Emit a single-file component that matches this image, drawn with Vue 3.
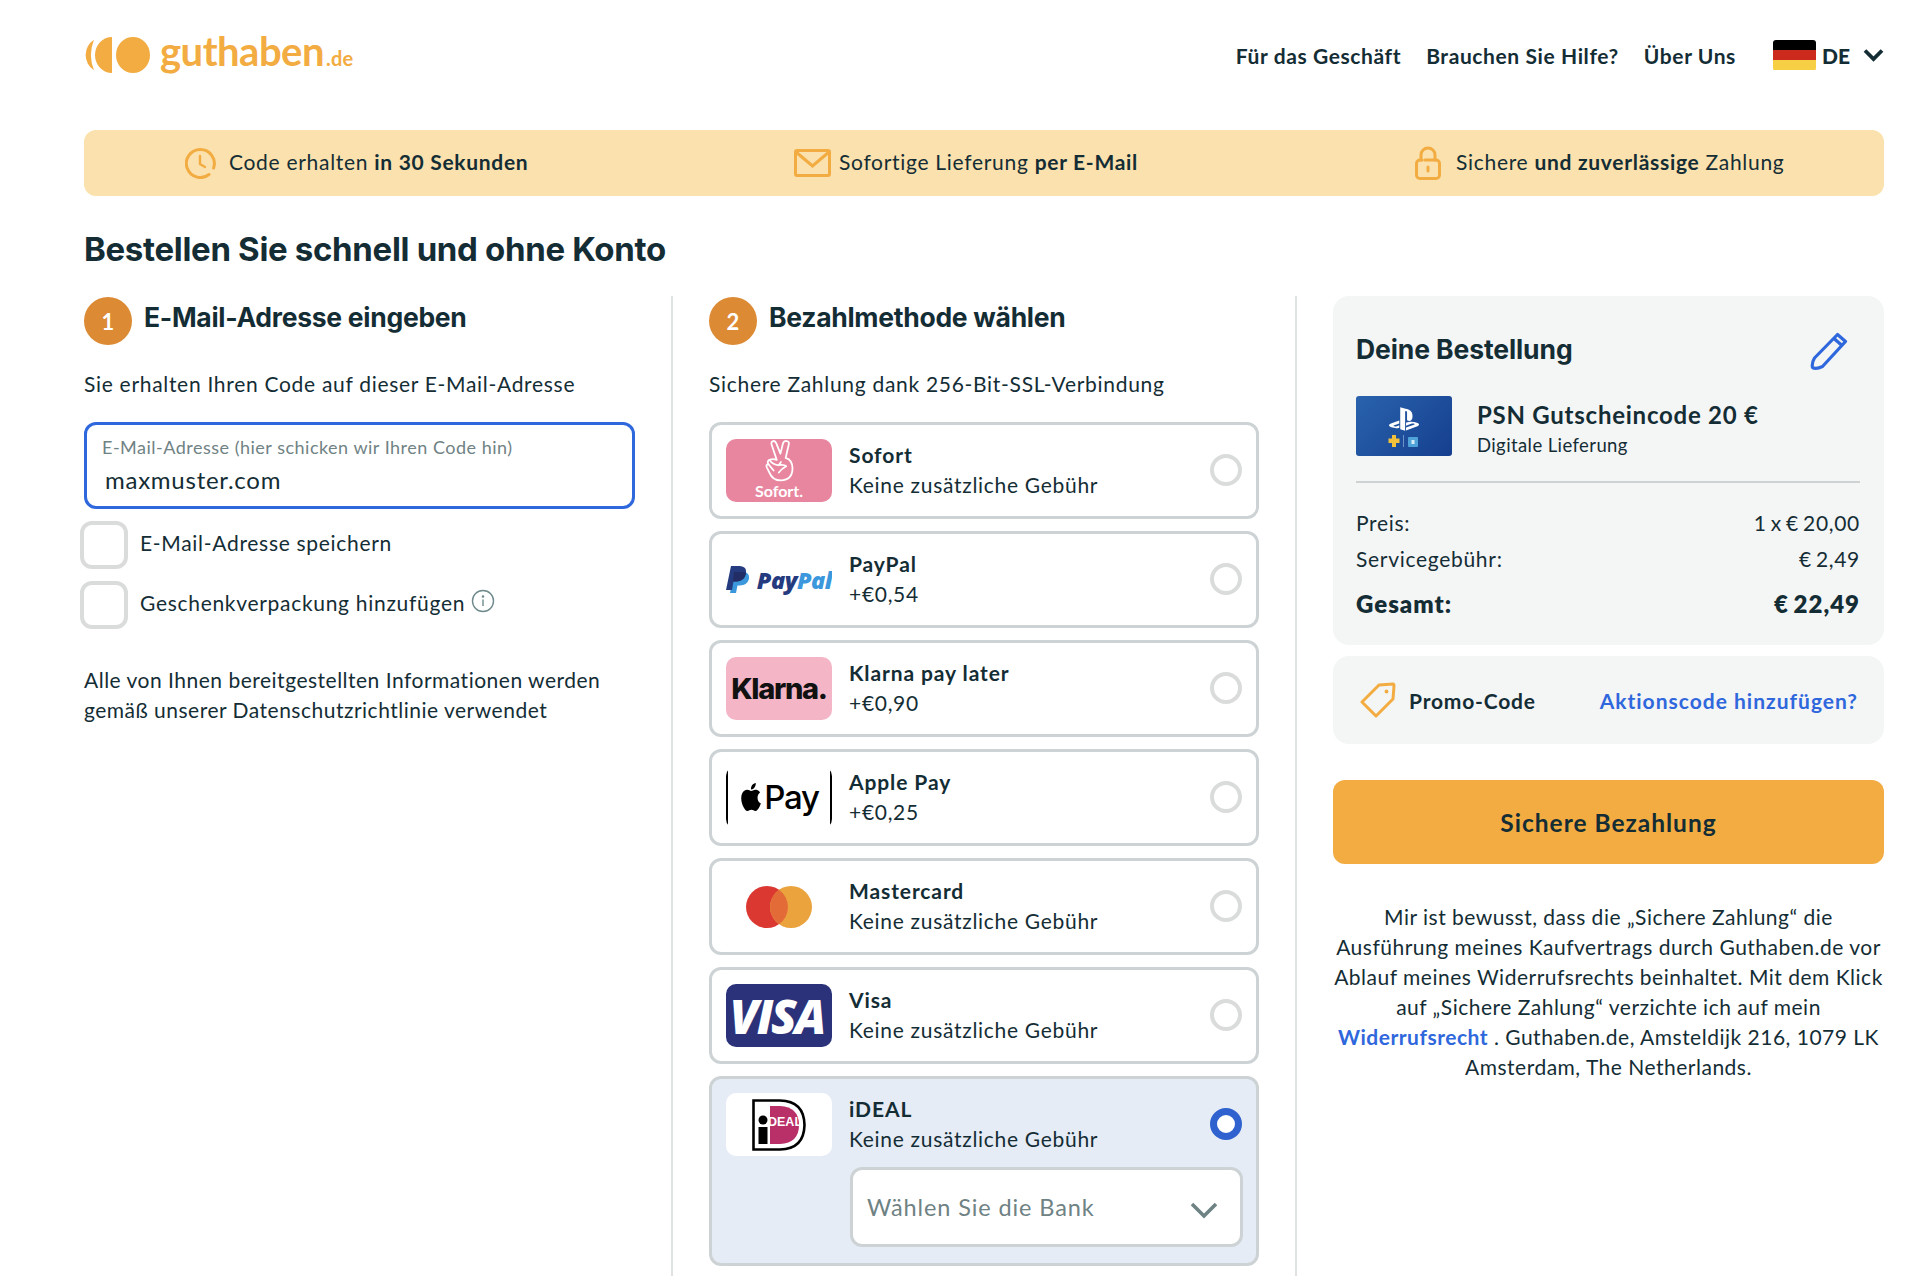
<script setup>
const perks = [
  { icon: 'clock', a: 'Code erhalten ', b: 'in 30 Sekunden', c: '' },
  { icon: 'mail', a: 'Sofortige Lieferung ', b: 'per E-Mail', c: '' },
  { icon: 'lock', a: 'Sichere ', b: 'und zuverlässige', c: ' Zahlung' }
]
const methods = [
  { id: 'sofort', name: 'Sofort', fee: 'Keine zusätzliche Gebühr' },
  { id: 'paypal', name: 'PayPal', fee: '+€0,54' },
  { id: 'klarna', name: 'Klarna pay later', fee: '+€0,90' },
  { id: 'apple', name: 'Apple Pay', fee: '+€0,25' },
  { id: 'mc', name: 'Mastercard', fee: 'Keine zusätzliche Gebühr' },
  { id: 'visa', name: 'Visa', fee: 'Keine zusätzliche Gebühr' },
  { id: 'ideal', name: 'iDEAL', fee: 'Keine zusätzliche Gebühr', active: true }
]
</script>

<template>
  <div class="page">
    <header class="top">
      <div class="logo">
        <svg width="66" height="36" viewBox="0 0 66 36">
          <path d="M10 2.800 A18 18 0 0 0 10 33.200 A40 40 0 0 1 10 2.800 Z" fill="#f2ac42" />
          <path d="M28 0 V36 A17 18 0 0 1 28 0 Z" fill="#f2ac42" />
          <ellipse cx="49" cy="18" rx="17" ry="18" fill="#f2ac42" />
        </svg>
        <span class="logo-name">guthaben</span><span class="logo-tld">.de</span>
      </div>
      <nav class="nav">
        <a>Für das Geschäft</a>
        <a>Brauchen Sie Hilfe?</a>
        <a>Über Uns</a>
        <span class="lang">
          <span class="flag"><i class="f1"></i><i class="f2"></i><i class="f3"></i></span>
          <b>DE</b>
          <svg width="21" height="14" viewBox="0 0 21 14"><path d="M2 2.500 L10.500 11 L19 2.500" fill="none" stroke="#142d35" stroke-width="3.800" /></svg>
        </span>
      </nav>
    </header>

    <section class="perks">
      <div v-for="p in perks" :key="p.icon" class="perk" :class="p.icon">
        <svg v-if="p.icon === 'clock'" width="32" height="32" viewBox="0 0 32 32" fill="none" stroke="#f2ac42" stroke-width="3" stroke-linecap="round">
          <path d="M28.600 21 A14 14 0 1 0 24 27.500" /><path d="M15 9 V17 L20 20" stroke-width="2.400" />
        </svg>
        <svg v-if="p.icon === 'mail'" width="37" height="28" viewBox="0 0 37 28" fill="none" stroke="#f2ac42" stroke-width="3">
          <rect x="1.500" y="1.500" width="34" height="25" rx="1.500" /><path d="M2 3 L18.500 17 L35 3" />
        </svg>
        <svg v-if="p.icon === 'lock'" width="26" height="34" viewBox="0 0 26 34" fill="none" stroke="#f2ac42" stroke-width="3" stroke-linecap="round">
          <path d="M6 14 V9 A7 7 0 0 1 20 9 V14" /><path d="M10 14 H21 A3.500 3.500 0 0 1 24.500 17.500 V29 A3.500 3.500 0 0 1 21 32.500 H5 A3.500 3.500 0 0 1 1.500 29 V17.500 A3.500 3.500 0 0 1 5 14 H7" /><path d="M13 21 V25" />
        </svg>
        <span>{{ p.a }}<b>{{ p.b }}</b>{{ p.c }}</span>
      </div>
    </section>

    <h1 class="title">Bestellen Sie schnell und ohne Konto</h1>

    <main class="cols">
      <section class="col first">
        <div class="step"><span class="num">1</span><h2>E-Mail-Adresse eingeben</h2></div>
        <p class="lead">Sie erhalten Ihren Code auf dieser E-Mail-Adresse</p>
        <div class="input">
          <span class="input-label">E-Mail-Adresse (hier schicken wir Ihren Code hin)</span>
          <span class="input-value">maxmuster.com</span>
        </div>
        <label class="check"><span class="box"></span>E-Mail-Adresse speichern</label>
        <label class="check second">
          <span class="box"></span>Geschenkverpackung hinzufügen
          <svg class="info" width="24" height="24" viewBox="0 0 24 24" fill="none" stroke="#6f8a8c" stroke-width="1.400">
            <circle cx="12" cy="12" r="10.500" /><path d="M12 10.500 V17" /><circle cx="12" cy="7.500" r=".6" fill="#6f8a8c" />
          </svg>
        </label>
        <p class="note">Alle von Ihnen bereitgestellten Informationen werden gemäß unserer Datenschutzrichtlinie verwendet</p>
      </section>

      <section class="col middle">
        <div class="step"><span class="num">2</span><h2>Bezahlmethode wählen</h2></div>
        <p class="lead">Sichere Zahlung dank 256-Bit-SSL-Verbindung</p>
        <div class="methods">
          <div v-for="m in methods" :key="m.id" class="method" :class="{ active: m.active }">
            <div class="method-main">
              <div class="brand" :class="m.id">
                <template v-if="m.id === 'sofort'">
                  <svg class="hand" width="36" height="42" viewBox="0 0 34 40" fill="none" stroke="#fff" stroke-width="1.700" stroke-linejoin="round" stroke-linecap="round">
                    <path d="M12 19 L7 4 Q6.500 1.500 8.500 1 Q10.500 .6 11.500 3 L15.500 13 L18 3 Q19 .5 21.500 1 Q24 1.500 23.500 4 L20.500 17 Q27 19 27 27 Q27 38 16 38.500 Q8 38.500 5 31 L2.500 26 Q1.500 23.500 4 23 Q2.500 20 5 19 Q8 17.500 12 19 Z" />
                    <path d="M5 19 Q8 23 13 24 M4 23 L9 29 M13 24 Q19 23 21 25 Q17 27 14 31 M14 24 L16 21" />
                  </svg>
                  <span class="sofort-t">Sofort.</span>
                </template>
                <template v-else-if="m.id === 'paypal'">
                  <svg width="24" height="28" viewBox="0 0 24 28">
                    <path d="M8 6 H18 Q24 7 23 13 Q21 19.500 14 19.500 H11.500 L10 27 H4 Z" fill="#3b98dc" />
                    <path d="M5 0 H14 Q21 .5 20 7 Q18.500 15 11 15.500 H7.500 L6 24 H0 Z" fill="#253b80" />
                    <path d="M8 6 H17 Q20 6 20 7.500 Q18.500 15 11 15.500 H7 Z" fill="#222d65" />
                  </svg>
                  <span class="pp"><span class="pp1">Pay</span><span class="pp2">Pal</span></span>
                </template>
                <span v-else-if="m.id === 'klarna'" class="kl">Klarna.</span>
                <template v-else-if="m.id === 'apple'">
                  <i class="ap-bar left"></i>
                  <svg width="24" height="28" viewBox="0 0 24 24" preserveAspectRatio="none">
                    <path fill="#000" d="M12.152 6.896c-.948 0-2.415-1.078-3.960-1.040-2.040.027-3.910 1.183-4.961 3.014-2.117 3.675-.546 9.103 1.519 12.090 1.013 1.454 2.208 3.090 3.792 3.039 1.520-.065 2.090-.987 3.935-.987 1.831 0 2.350.987 3.960.948 1.637-.026 2.676-1.480 3.676-2.948 1.156-1.688 1.636-3.325 1.662-3.415-.039-.013-3.182-1.221-3.220-4.857-.026-3.040 2.480-4.494 2.597-4.559-1.429-2.090-3.623-2.324-4.390-2.376-2-.156-3.675 1.090-4.610 1.090zM15.530 3.830c.843-1.012 1.400-2.427 1.245-3.830-1.207.052-2.662.805-3.532 1.818-.780.896-1.454 2.338-1.273 3.714 1.338.104 2.715-.688 3.559-1.701" />
                  </svg>
                  <span class="ap-t">Pay</span>
                  <i class="ap-bar right"></i>
                </template>
                <svg v-else-if="m.id === 'mc'" class="mc-mark" width="68" height="44" viewBox="0 0 68 44">
                  <circle cx="23" cy="22" r="21" fill="#dc3832" />
                  <circle cx="47" cy="22" r="21" fill="#eba33e" />
                  <path d="M35 4.800 A21 21 0 0 1 35 39.200 A21 21 0 0 1 35 4.800 Z" fill="#e36b38" />
                </svg>
                <span v-else-if="m.id === 'visa'" class="vi">VISA</span>
                <svg v-else-if="m.id === 'ideal'" width="54" height="52" viewBox="0 0 54 52">
                  <path d="M1.500 1.500 H28 Q52 2 52.500 26 Q52 50 28 50.500 H1.500 Z" fill="#fff" stroke="#000" stroke-width="2.600" />
                  <path d="M18 7 H28 Q47 8 47 26 Q47 44 28 45 H18 Z" fill="#b92f67" />
                  <circle cx="11" cy="21" r="4.500" fill="#000" />
                  <rect x="6.500" y="28" width="9" height="17" fill="#000" />
                  <text x="16" y="27" class="ideal-t">DEAL</text>
                </svg>
              </div>
              <div class="method-text">
                <strong>{{ m.name }}</strong>
                <span>{{ m.fee }}</span>
              </div>
              <span class="radio"></span>
            </div>
            <div v-if="m.active" class="bank">
              <span>Wählen Sie die Bank</span>
              <svg width="28" height="18" viewBox="0 0 28 18"><path d="M2 3 L14 15 L26 3" fill="none" stroke="#6f8284" stroke-width="3.600" /></svg>
            </div>
          </div>
        </div>
      </section>

      <aside class="col last">
        <div class="card order">
          <div class="order-head">
            <h3>Deine Bestellung</h3>
            <svg width="38" height="38" viewBox="0 0 38 38" fill="none" stroke="#2f67dc" stroke-width="3.200" stroke-linejoin="round">
              <path d="M27.500 2.500 L35.500 9.500 L12.500 34.500 Q6 37.500 2.500 35.500 Q1.500 31 4.500 26 Z" /><path d="M24 6.500 L32 13.500" />
            </svg>
          </div>
          <div class="product">
            <div class="thumb">
              <svg width="40" height="30" viewBox="0 0 24 24" preserveAspectRatio="xMidYMid meet">
                <path fill="#fff" d="M8.984 2.596v17.547l3.915 1.261V6.688c0-.69.304-1.151.794-.991.636.18.76.814.76 1.505v5.875c2.441 1.193 4.362-.002 4.362-3.152 0-3.237-1.126-4.675-4.438-5.827-1.307-.448-3.728-1.186-5.39-1.502zm4.656 16.241l6.296-2.275c.715-.258.826-.625.246-.818-.586-.192-1.637-.139-2.357.123l-4.205 1.499v-2.385l.24-.085s1.201-.42 2.913-.615c1.696-.18 3.785.029 5.437.661 1.848.601 2.04 1.472 1.576 2.072-.465.6-1.622 1.036-1.622 1.036l-8.544 3.107V18.86zM1.807 18.6c-1.9-.545-2.214-1.668-1.352-2.32.801-.586 2.16-1.052 2.160-1.052l5.615-2.013v2.313L4.205 17c-.705.271-.825.632-.239.826.586.195 1.637.15 2.343-.12L8.247 17v2.074c-.12.03-.256.044-.39.073-1.939.331-3.996.196-6.038-.479z" />
              </svg>
              <svg class="thumb-sub" width="32" height="14" viewBox="0 0 32 14">
                <path d="M4 1 H8 V4.500 H11.500 V9 H8 V13 H4 V9 H.5 V4.500 H4 Z" fill="#f4c13d" />
                <rect x="15" y="1" width="1" height="12" fill="#6d93c8" />
                <rect x="20" y="3" width="10" height="10" rx="1" fill="#4fa3d9" />
                <rect x="23.500" y="6" width="3" height="4" fill="#d5ecf7" />
              </svg>
            </div>
            <div>
              <div class="product-name">PSN Gutscheincode 20 €</div>
              <div class="product-sub">Digitale Lieferung</div>
            </div>
          </div>
          <div class="rows">
            <div class="row"><span>Preis:</span><span>1 x € 20,00</span></div>
            <div class="row"><span>Servicegebühr:</span><span>€ 2,49</span></div>
            <div class="row total"><span>Gesamt:</span><span>€ 22,49</span></div>
          </div>
        </div>

        <div class="card promo">
          <svg width="36" height="36" viewBox="0 0 36 36" fill="none" stroke="#f2ac42" stroke-width="3" stroke-linejoin="round">
            <path d="M19 3 L33 2 Q34 2 34 4 L33 17 L16 34 L2 20 Z" /><circle cx="26.500" cy="9.500" r="1.200" fill="#f2ac42" stroke-width="1.500" />
          </svg>
          <span class="promo-t">Promo-Code</span>
          <a class="promo-l">Aktionscode hinzufügen?</a>
        </div>

        <button class="pay">Sichere Bezahlung</button>

        <p class="terms">
          Mir ist bewusst, dass die „Sichere Zahlung“ die<br />Ausführung meines Kaufvertrags durch Guthaben.de vor<br />Ablauf meines Widerrufsrechts beinhaltet. Mit dem Klick<br />auf „Sichere Zahlung“ verzichte ich auf mein<br /><a>Widerrufsrecht</a> . Guthaben.de, Amsteldijk 216, 1079 LK<br />Amsterdam, The Netherlands.
        </p>
      </aside>
    </main>
  </div>
</template>

<style>
html, body { margin: 0; height: 100%; overflow: hidden; background: #fff; }
</style>

<style scoped>
* { box-sizing: border-box; }
.page {
  width: 1932px;
  height: 1276px;
  overflow: hidden;
  padding: 0 48px 0 84px;
  font-family: Lato, "Liberation Sans", sans-serif;
  font-size: 21px;
  letter-spacing: .7px;
  color: #142d35;
}
.top { height: 130px; padding-top: 37px; display: flex; justify-content: space-between; align-items: flex-start; }
.logo { display: flex; align-items: baseline; color: #f2ac42; }
.logo svg { align-self: flex-start; margin-right: 10px; }
.logo-name { font: 700 40px/28px Lato, sans-serif; letter-spacing: -.5px; }
.logo-tld { font: 700 20px/28px Lato, sans-serif; letter-spacing: .2px; margin-left: 2px; }
.nav { display: flex; align-items: center; gap: 25px; font-weight: 700; height: 36px; letter-spacing: .6px; }
.lang { display: flex; align-items: center; margin-left: 12px; }
.flag { width: 43px; height: 31px; border-radius: 3px; overflow: hidden; display: flex; flex-direction: column; margin-right: 6px; }
.flag i { flex: 1; display: block; }
.f1 { background: #000; } .f2 { background: #cd2a1e; } .f3 { background: #f7cf45; }
.lang b { letter-spacing: 0; }
.lang svg { margin-left: 13px; }

.perks { height: 66px; background: #fae1ad; border-radius: 12px; display: grid; grid-template-columns: 620px 600px 580px; align-items: center; }
.perk { display: flex; align-items: center; gap: 12px; }
.perk span { margin-top: -3px; }
.perk.clock { padding-left: 101px; }
.perk.mail { padding-left: 90px; gap: 8px; }
.perk.lock { padding-left: 111px; gap: 15px; }
.perk b { font-weight: 700; }
.title { margin: 34px 0 0; font: 700 33px/38px Inter, sans-serif; letter-spacing: -.32px; height: 63px; }

.cols { display: flex; height: 990px; margin-top: 3px; }
.col { width: 551px; flex: none; }
.first { margin-right: 36px; }
.middle { border-left: 2px solid #dfe3e4; padding-left: 36px; width: 589px; margin-right: 35px; }
.last { border-left: 2px solid #dfe3e4; padding-left: 36px; width: 589px; }
.step { display: flex; align-items: center; gap: 12px; height: 48px; margin-top: 1px; }
.num { width: 48px; height: 48px; border-radius: 50%; background: #dc8a33; color: #fff; font-weight: 700; font-size: 22px; letter-spacing: 0; display: flex; align-items: center; justify-content: center; flex: none; }
.step h2 { margin: -8px 0 0; font: 700 26.500px/32px Inter, sans-serif; letter-spacing: -.28px; }
.lead { margin: 24px 0 0; line-height: 30px; }
.input { margin-top: 23px; height: 87px; border: 3px solid #2f67dc; border-radius: 12px; padding: 10px 0 0 15px; display: flex; flex-direction: column; }
.input-label { font-size: 18px; line-height: 24px; color: #6f8284; letter-spacing: .5px; }
.input-value { font-size: 24px; line-height: 30px; margin: 6px 0 0 3px; letter-spacing: .75px; color: #142d35; }
.check { display: flex; align-items: center; margin: 12px 0 0 -4px; height: 48px; padding-bottom: 5px; }
.box { align-self: flex-start; width: 48px; height: 48px; border: 4px solid #dadbdb; border-radius: 12px; margin-right: 12px; flex: none; background: #fff; }
.info { margin: -4px 0 0 6px; }
.note { margin: 36px 0 0; line-height: 30px; letter-spacing: .5px; }

.methods { margin-top: 23px; width: 550px; display: flex; flex-direction: column; gap: 12px; }
.method { border: 3px solid #cdd3d5; border-radius: 12px; padding: 14px 0 0 14px; height: 97px; background: #fff; }
.method.active { background: #e6ecf6; height: 190px; }
.method-main { display: flex; align-items: flex-start; height: 63px; }
.brand { width: 106px; height: 63px; border-radius: 10px; flex: none; display: flex; align-items: center; justify-content: center; overflow: hidden; position: relative; }
.brand.sofort { background: #e9869f; flex-direction: column; justify-content: flex-start; padding-top: 1px; }
.hand { margin-left: 6px; flex: none; }
.sofort-t { color: #fff; font: 700 16px/18px Lato, sans-serif; letter-spacing: 0; }
.brand.paypal { justify-content: space-between; }
.pp { font: italic 800 23.500px/28px "Open Sans", sans-serif; letter-spacing: -.5px; }
.pp1 { color: #253b80; } .pp2 { color: #3b98dc; }
.brand.klarna { background: #f4b5c7; }
.kl { color: #111; font: 800 29px/36px Inter, sans-serif; letter-spacing: -1.300px; }
.brand.apple { gap: 1px; color: #000; padding-bottom: 2px; }
.ap-t { font: 500 33px/42px Inter, sans-serif; letter-spacing: -1.200px; }
.ap-bar { position: absolute; top: 4px; height: 56px; width: 2px; background: #000; border-radius: 2px; }
.ap-bar.left { left: 0; } .ap-bar.right { right: 0; }
.mc-mark { margin-right: 3px; }
.brand.visa { background: #2b327a; }
.vi { color: #fff; font: italic 800 47px/50px "Open Sans", sans-serif; letter-spacing: -2.200px; padding-right: 4px; }
.brand.ideal { background: #fff; }
.ideal-t { fill: #fff; font: 700 12.500px "Liberation Sans", sans-serif; letter-spacing: 0; }
.method-text { display: flex; flex-direction: column; margin-left: 17px; padding-top: 1px; }
.method-text strong { font-weight: 700; line-height: 30px; letter-spacing: .9px; }
.method-text span { line-height: 30px; }
.radio { width: 32px; height: 32px; border-radius: 50%; border: 4px solid #dadbdb; background: #fff; margin: 15px 14px 0 auto; flex: none; }
.active .radio { border: 7px solid #2f62cf; }
.bank { margin: 11px 0 0 124px; width: 393px; height: 80px; background: #fff; border: 3px solid #cdd3d5; border-radius: 12px; display: flex; align-items: center; justify-content: space-between; padding: 0 22px 0 14px; font-size: 23.500px; letter-spacing: .9px; color: #6f8284; }
.bank svg { margin-top: 6px; }

.card { background: #f4f5f5; border-radius: 16px; }
.order { height: 349px; padding: 0 24px 0 23px; }
.order-head { display: flex; justify-content: space-between; align-items: center; height: 100px; padding: 12px 12px 0 0; }
.order-head h3 { margin: -7px 0 0; font: 700 26.500px/32px Inter, sans-serif; letter-spacing: -.1px; }
.order-head svg { margin-top: -3px; }
.product { display: flex; gap: 25px; height: 87px; border-bottom: 2px solid #cfd2d2; }
.thumb { width: 96px; height: 60px; border-radius: 3px; background: linear-gradient(135deg, #2a63ad, #153f8e); display: flex; flex-direction: column; align-items: center; justify-content: center; }
.thumb-sub { margin-top: 0; }
.product-name { font-size: 24px; font-weight: 700; line-height: 32px; margin-top: 3px; letter-spacing: .75px; }
.product-sub { font-size: 18.500px; line-height: 26px; margin-top: 1px; letter-spacing: .4px; }
.rows { padding-top: 24px; }
.row { display: flex; justify-content: space-between; line-height: 32px; height: 36px; word-spacing: -2px; }
.row.total { font-weight: 800; font-size: 24px; margin-top: 9px; letter-spacing: 1px; }
.promo { margin-top: 11px; height: 88px; display: flex; align-items: center; padding: 0 26px 0 27px; }
.promo-t { font-weight: 700; margin-left: 13px; letter-spacing: .8px; }
.promo-l { margin-left: auto; color: #2f67dc; font-weight: 700; letter-spacing: 1px; }
.pay { margin-top: 36px; width: 100%; height: 84px; border: 0; border-radius: 12px; background: #f2ac42; color: #142d35; font: 700 24.500px Lato, sans-serif; letter-spacing: 1px; display: block; }
.terms { margin: 38px 0 0; text-align: center; line-height: 30px; white-space: nowrap; letter-spacing: .5px; }
.terms a { color: #2f67dc; font-weight: 700; }
</style>
